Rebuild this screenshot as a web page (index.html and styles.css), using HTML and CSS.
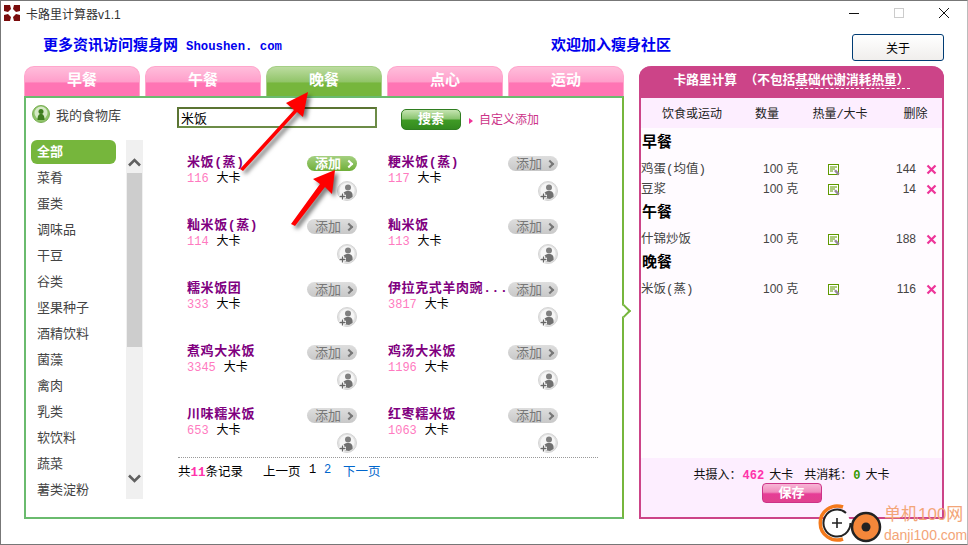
FILE: index.html
```html
<!DOCTYPE html>
<html lang="zh-CN">
<head>
    <meta charset="UTF-8">
    <title>卡路里计算器v1.1</title>
    <link rel="stylesheet" href="styles.css">
</head>
<body>

<svg class="sprite" width="0" height="0">
    <symbol id="person" viewBox="0 0 20 20">
        <circle cx="10" cy="10" r="9.5" fill="#e2e2e2" stroke="#d4d4d4"/>
        <circle cx="10" cy="9.5" r="7.5" fill="#f6f6f6"/>
        <circle cx="11" cy="6.5" r="3" fill="#808080"/>
        <path d="M6 17 C5 11 8 10 11 10 C14 10 16 11 15.5 16 L12 18 Z" fill="#707070"/>
        <path d="M2 15.5 H9 M5.5 12 V19" stroke="#fff" stroke-width="3.5"/>
        <path d="M2.5 15.5 H8.5 M5.5 12.5 V18.5" stroke="#666" stroke-width="1.3"/>
    </symbol>
    <symbol id="note" viewBox="0 0 12 12">
        <rect x=".5" y=".5" width="10" height="10" fill="#fff" stroke="#5f9900"/>
        <path d="M2 3 H9 M2 5 H7 M2 7 H5" stroke="#5f9900"/>
        <path d="M6 7 L8 5.5 L11.5 9.5 L10 11.5 Z" fill="#9a8aa0"/>
    </symbol>
    <symbol id="cross" viewBox="0 0 11 11">
        <path d="M1.5 1.5 L9.5 9.5 M9.5 1.5 L1.5 9.5" stroke="#ee3399" stroke-width="2.2"/>
    </symbol>
</svg>

<div class="window">

    <!-- 标题栏 -->
    <div class="titlebar">
        <svg class="app-icon" viewBox="0 0 16 16" width="16" height="16">
            <path d="M0 0 H6 L7 4 L4 7 L0 6 Z M16 0 H10 L9 4 L12 7 L16 6 Z M0 16 H6 L7 12 L4 9 L0 10 Z M16 16 H10 L9 12 L12 9 L16 10 Z" fill="#7a0c0c"/>
        </svg>
        <span class="app-title">卡路里计算器v1.1</span>
        <div class="win-buttons">
            <svg width="12" height="12" viewBox="0 0 12 12"><path d="M1 6.5 H11" stroke="#111"/></svg>
            <svg width="12" height="12" viewBox="0 0 12 12"><rect x="1.5" y="1.5" width="9" height="9" fill="none" stroke="#ccc"/></svg>
            <svg width="12" height="12" viewBox="0 0 12 12"><path d="M1 1 L11 11 M11 1 L1 11" stroke="#111"/></svg>
        </div>
    </div>

    <!-- 顶部链接 -->
    <div class="topbar">
        <div class="promo promo-left">更多资讯访问瘦身网<span class="promo-site">Shoushen. com</span></div>
        <div class="promo promo-right">欢迎加入瘦身社区</div>
        <button class="about-btn">关于</button>
    </div>

    <div class="main">
        <div class="left-col">
            <div class="tabs">
                <div class="tab">早餐</div>
                <div class="tab">午餐</div>
                <div class="tab tab-active">晚餐</div>
                <div class="tab">点心</div>
                <div class="tab">运动</div>
            </div>

            <div class="panel">
                <div class="panel-top">
                    <div class="library">
                        <svg width="18" height="18" viewBox="0 0 18 18">
                            <circle cx="9" cy="9" r="8.5" fill="#8fc46a" stroke="#7aae55"/>
                            <circle cx="9" cy="8" r="6.5" fill="#d6e9c6"/>
                            <circle cx="9" cy="6.5" r="2.5" fill="#3f7d1f"/>
                            <path d="M5.5 15 C5.5 10 7 9 9 9 C11 9 12.5 10 12.5 15 Z" fill="#3f7d1f"/>
                        </svg>
                        <span>我的食物库</span>
                    </div>
                    <input class="search-input" type="text" value="米饭">
                    <button class="search-btn">搜索</button>
                    <span class="custom-add">自定义添加</span>
                </div>

                <div class="panel-body">
                    <ul class="cats">
                        <li class="cat-active">全部</li>
                        <li>菜肴</li>
                        <li>蛋类</li>
                        <li>调味品</li>
                        <li>干豆</li>
                        <li>谷类</li>
                        <li>坚果种子</li>
                        <li>酒精饮料</li>
                        <li>菌藻</li>
                        <li>禽肉</li>
                        <li>乳类</li>
                        <li>软饮料</li>
                        <li>蔬菜</li>
                        <li>薯类淀粉</li>
                    </ul>

                    <div class="scroll">
                        <div class="scroll-arrow">
                            <svg width="13" height="9" viewBox="0 0 13 9"><path d="M1 7.5 L6.5 2 L12 7.5" fill="none" stroke="#606060" stroke-width="2.6"/></svg>
                        </div>
                        <div class="scroll-thumb"></div>
                        <div class="scroll-arrow scroll-arrow-down">
                            <svg width="13" height="9" viewBox="0 0 13 9"><path d="M1 1.5 L6.5 7 L12 1.5" fill="none" stroke="#606060" stroke-width="2.6"/></svg>
                        </div>
                    </div>

                    <div class="results">
                        <div class="foods">
                            <div class="food">
                                <div class="food-info"><div class="food-name">米饭(蒸)</div><div class="food-cal"><em>116</em>大卡</div></div>
                                <div class="food-actions"><button class="add-btn add-btn-hover">添加<b></b></button><svg class="avatar"><use href="#person"/></svg></div>
                            </div>
                            <div class="food">
                                <div class="food-info"><div class="food-name">粳米饭(蒸)</div><div class="food-cal"><em>117</em>大卡</div></div>
                                <div class="food-actions"><button class="add-btn">添加<b></b></button><svg class="avatar"><use href="#person"/></svg></div>
                            </div>
                            <div class="food">
                                <div class="food-info"><div class="food-name">籼米饭(蒸)</div><div class="food-cal"><em>114</em>大卡</div></div>
                                <div class="food-actions"><button class="add-btn">添加<b></b></button><svg class="avatar"><use href="#person"/></svg></div>
                            </div>
                            <div class="food">
                                <div class="food-info"><div class="food-name">籼米饭</div><div class="food-cal"><em>113</em>大卡</div></div>
                                <div class="food-actions"><button class="add-btn">添加<b></b></button><svg class="avatar"><use href="#person"/></svg></div>
                            </div>
                            <div class="food">
                                <div class="food-info"><div class="food-name">糯米饭团</div><div class="food-cal"><em>333</em>大卡</div></div>
                                <div class="food-actions"><button class="add-btn">添加<b></b></button><svg class="avatar"><use href="#person"/></svg></div>
                            </div>
                            <div class="food">
                                <div class="food-info"><div class="food-name">伊拉克式羊肉豌...</div><div class="food-cal"><em>3817</em>大卡</div></div>
                                <div class="food-actions"><button class="add-btn">添加<b></b></button><svg class="avatar"><use href="#person"/></svg></div>
                            </div>
                            <div class="food">
                                <div class="food-info"><div class="food-name">煮鸡大米饭</div><div class="food-cal"><em>3345</em>大卡</div></div>
                                <div class="food-actions"><button class="add-btn">添加<b></b></button><svg class="avatar"><use href="#person"/></svg></div>
                            </div>
                            <div class="food">
                                <div class="food-info"><div class="food-name">鸡汤大米饭</div><div class="food-cal"><em>1196</em>大卡</div></div>
                                <div class="food-actions"><button class="add-btn">添加<b></b></button><svg class="avatar"><use href="#person"/></svg></div>
                            </div>
                            <div class="food">
                                <div class="food-info"><div class="food-name">川味糯米饭</div><div class="food-cal"><em>653</em>大卡</div></div>
                                <div class="food-actions"><button class="add-btn">添加<b></b></button><svg class="avatar"><use href="#person"/></svg></div>
                            </div>
                            <div class="food">
                                <div class="food-info"><div class="food-name">红枣糯米饭</div><div class="food-cal"><em>1063</em>大卡</div></div>
                                <div class="food-actions"><button class="add-btn">添加<b></b></button><svg class="avatar"><use href="#person"/></svg></div>
                            </div>
                        </div>
                        <div class="pager">
                            <span class="pager-total">共<b>11</b>条记录</span>
                            <span class="pager-prev">上一页</span>
                            <span class="pager-num">1</span>
                            <span class="pager-num pager-link">2</span>
                            <span class="pager-link">下一页</span>
                        </div>
                    </div>
                </div>
                <div class="panel-notch"></div>
            </div>
        </div>

        <!-- 右侧计算面板 -->
        <div class="calc">
            <div class="calc-head">卡路里计算 （不包括<span class="calc-note">基础代谢消耗热量）</span></div>
            <div class="calc-cols">
                <span>饮食或运动</span><span>数量</span><span>热量/大卡</span><span>删除</span>
            </div>
            <div class="calc-body">
                <div class="meal">早餐</div>
                <div class="entry"><span class="entry-name">鸡蛋(均值)</span><span class="qty">100 克</span><svg class="note"><use href="#note"/></svg><span class="kcal">144</span><svg class="del"><use href="#cross"/></svg></div>
                <div class="entry"><span class="entry-name">豆浆</span><span class="qty">100 克</span><svg class="note"><use href="#note"/></svg><span class="kcal">14</span><svg class="del"><use href="#cross"/></svg></div>
                <div class="meal">午餐</div>
                <div class="entry"><span class="entry-name">什锦炒饭</span><span class="qty">100 克</span><svg class="note"><use href="#note"/></svg><span class="kcal">188</span><svg class="del"><use href="#cross"/></svg></div>
                <div class="meal">晚餐</div>
                <div class="entry"><span class="entry-name">米饭(蒸)</span><span class="qty">100 克</span><svg class="note"><use href="#note"/></svg><span class="kcal">116</span><svg class="del"><use href="#cross"/></svg></div>
            </div>
            <div class="calc-foot">
                <div class="totals">共摄入：<b class="in">462</b>大卡<span class="gap"></span>共消耗：<b class="out">0</b>大卡</div>
                <button class="save-btn">保存</button>
            </div>
        </div>
    </div>

    <!-- 红色箭头标注 -->
    <svg class="arrows" width="968" height="545" viewBox="0 0 968 545">
        <path d="M240 169 L294 110 L286 103 L308 92 L303 117 L297 112 L243 171 Z" fill="#f00"/>
        <path d="M291 224 L320 184 L313 179 L335 170 L332 194 L325 187 L295 226 Z" fill="#f00"/>
    </svg>

    <!-- 水印 -->
    <div class="watermark">
        <svg width="64" height="42" viewBox="0 0 64 42">
            <path d="M25 4 A17 17 0 1 0 25 36" fill="none" stroke="#f47a1c" stroke-width="3.5"/>
            <circle cx="19" cy="20" r="13" fill="#fff"/>
            <path d="M28 10 A13.5 13.5 0 1 0 32.5 20" fill="none" stroke="#222" stroke-width="2"/>
            <path d="M14 20 H24 M19 15 V25" stroke="#222" stroke-width="1.6"/>
            <circle cx="48" cy="24" r="14" fill="#f4873a" stroke="#222" stroke-width="2.5"/>
            <circle cx="48" cy="24" r="4.5" fill="#222"/>
        </svg>
        <div class="watermark-text">
            <div class="wm-name">单机100网</div>
            <div class="wm-url">danji100.com</div>
        </div>
    </div>
</div>

</body>
</html>
```

FILE: styles.css
```css
* {
    box-sizing: border-box;
}
body {
    margin: 0;
    background-color: #fff;
    font-family: "Liberation Mono", "Noto Sans CJK SC", monospace;
    font-size: 13px;
    color: #000;
}
.sprite {
    position: absolute;
}
.window {
    position: relative;
    width: 968px;
    height: 545px;
    overflow: hidden;
    background-color: #fff;
    border: 1px solid #777;
    border-right-color: #bbb;
}

/* 标题栏 */
.titlebar {
    display: flex;
    align-items: center;
    height: 24px;
    padding-left: 3px;
}
.app-icon {
    margin-right: 6px;
}
.app-title {
    font-family: "Liberation Sans", "Noto Sans CJK SC", sans-serif;
    font-size: 12px;
    color: #333;
}
.win-buttons {
    display: flex;
    gap: 33px;
    margin-left: auto;
    margin-right: 17px;
}

/* 顶部 */
.topbar {
    display: flex;
    align-items: center;
    height: 41px;
    padding-left: 42px;
}
.promo {
    margin-top: 2px;
    font-size: 15px;
    line-height: 20px;
    font-weight: bold;
    color: #0000ee;
}
.promo-left {
    width: 508px;
}
.promo-site {
    margin-left: 8px;
    font-size: 12.3px;
}
.promo-right {
    width: 301px;
}
.about-btn {
    width: 92px;
    height: 27px;
    margin-top: 4px;
    font-family: inherit;
    font-size: 12px;
    background: linear-gradient(#fff, #f0eeec);
    border: 1px solid #003c74;
    border-radius: 3px;
}

.main {
    display: flex;
    gap: 15px;
    padding-left: 23px;
}
.left-col {
    width: 600px;
}

/* 选项卡 */
.tabs {
    display: flex;
    gap: 5px;
}
.tab {
    width: 116px;
    height: 30px;
    text-align: center;
    font-size: 15px;
    line-height: 30px;
    font-weight: bold;
    color: #fff;
    background: linear-gradient(#ffbedb 0%, #ff9fcb 50%, #ff74b4 56%, #ff74b4 100%);
    border: 1px solid #ffa6cc;
    border-bottom: none;
    border-radius: 10px 10px 0 0;
}
.tab-active {
    background: linear-gradient(#bcdca0 0%, #92c56a 50%, #76b63c 56%, #76b63c 100%);
    border-color: #a5cf85;
}

.panel {
    position: relative;
    height: 423px;
    border: 2px solid #6abb6e;
    border-right-color: #76b63c;
}
.panel-notch {
    position: absolute;
    top: 208px;
    right: -7px;
    width: 10px;
    height: 10px;
    background-color: #fff;
    border-top: 2px solid #76b63c;
    border-right: 2px solid #76b63c;
    transform: rotate(45deg);
}
.panel-top {
    display: flex;
    align-items: flex-start;
    height: 42px;
    padding-left: 6px;
}
.library {
    display: flex;
    align-items: center;
    gap: 6px;
    width: 145px;
    height: 18px;
    margin-top: 7px;
    font-size: 13px;
    color: #444;
}
.search-input {
    width: 200px;
    height: 21px;
    margin-top: 9px;
    padding: 0 2px;
    font-family: inherit;
    font-size: 13px;
    border: 2px solid #5b7433;
    border-bottom-color: #6c8c47;
    border-right-color: #6c8c47;
    outline: none;
}
.search-btn {
    width: 60px;
    height: 21px;
    margin-top: 11px;
    margin-left: 24px;
    padding: 0;
    font-family: inherit;
    font-size: 13px;
    line-height: 17px;
    font-weight: bold;
    color: #fff;
    background: linear-gradient(#c6e5b2 0%, #8cc572 45%, #3f9a25 55%, #338a1f 100%);
    border: 1px solid #2f7d20;
    border-radius: 5px;
}
.custom-add {
    position: relative;
    margin-top: 15px;
    margin-left: 18px;
    font-size: 12px;
    line-height: 16px;
    color: #cc3388;
}
.custom-add::before {
    content: "";
    position: absolute;
    left: -10px;
    top: 5px;
    border-left: 4px solid #ee3399;
    border-top: 3px solid transparent;
    border-bottom: 3px solid transparent;
}

.panel-body {
    display: flex;
    align-items: flex-start;
    padding-left: 5px;
}
.cats {
    width: 85px;
    margin: 0;
    padding: 0;
    list-style: none;
}
.cats li {
    height: 26px;
    padding-left: 6px;
    line-height: 26px;
    font-size: 13px;
    color: #444;
}
.cats .cat-active {
    height: 24px;
    margin-bottom: 2px;
    font-weight: bold;
    color: #fff;
    background-color: #76b63c;
    border-radius: 6px;
}

/* 滚动条 */
.scroll {
    display: flex;
    flex-direction: column;
    width: 17px;
    height: 359px;
    margin-left: 10px;
    background-color: #f0f0f0;
}
.scroll-arrow {
    display: flex;
    align-items: center;
    justify-content: center;
    height: 33px;
    padding-top: 11px;
}
.scroll-arrow-down {
    margin-top: auto;
    height: 44px;
    padding-top: 3px;
}
.scroll-thumb {
    height: 174px;
    margin: 0 1px;
    background-color: #cdcdcd;
}

/* 食物列表 */
.results {
    width: 420px;
    margin-left: 35px;
    padding-top: 15px;
}
.foods {
    display: grid;
    grid-template-columns: 201px 201px;
    grid-auto-rows: 51px;
    row-gap: 12px;
    padding-left: 9px;
    height: 303px;
    border-bottom: 1px dotted #999;
}
.food {
    display: flex;
}
.food-info {
    width: 120px;
}
.food-name {
    height: 15px;
    font-size: 13px;
    line-height: 15px;
    font-weight: bold;
    letter-spacing: .6px;
    color: #800080;
    white-space: nowrap;
}
.food-cal {
    padding-top: 1px;
    font-size: 12px;
    line-height: 16px;
}
.food-cal em {
    margin-right: 8px;
    font-style: normal;
    color: #ff7ac0;
}
.food-actions {
    display: flex;
    flex-direction: column;
    align-items: flex-end;
    width: 50px;
}
.add-btn {
    display: flex;
    align-items: center;
    justify-content: center;
    gap: 5px;
    width: 50px;
    height: 15px;
    margin-top: 1px;
    padding: 1px 0 0 3px;
    font-family: inherit;
    font-size: 13px;
    line-height: 15px;
    color: #777;
    background: linear-gradient(#dedede, #c8c8c8);
    border: none;
    border-radius: 8px;
}
.add-btn b {
    width: 6px;
    height: 6px;
    border-top: 2px solid #777;
    border-right: 2px solid #777;
    transform: rotate(45deg);
}
.add-btn-hover {
    font-weight: bold;
    color: #fff;
    background: linear-gradient(#a4d080, #6fae38);
}
.add-btn-hover b {
    border-color: #fff;
}
.avatar {
    width: 20px;
    height: 20px;
    margin-top: 10px;
}

.pager {
    display: flex;
    align-items: center;
    height: 24px;
    font-size: 12.5px;
}
.pager-total {
    width: 85px;
}
.pager-total b {
    color: #ff33aa;
}
.pager-prev {
    width: 46px;
}
.pager-num {
    width: 15px;
    font-size: 12px;
}
.pager-num.pager-link {
    width: 19px;
}
.pager-link {
    color: #0066cc;
}

/* 右侧面板 */
.calc {
    display: flex;
    flex-direction: column;
    width: 305px;
    height: 453px;
    border: 2px solid #cc4488;
    border-top: none;
    border-radius: 12px 12px 0 0;
}
.calc-head {
    height: 32px;
    margin: 0 -2px;
    text-align: center;
    font-size: 12.7px;
    line-height: 30px;
    font-weight: bold;
    color: #fff;
    background-color: #cc4488;
    border-radius: 12px 12px 0 0;
}
.calc-note {
    border-bottom: 1px dashed #fff;
}
.calc-cols {
    display: grid;
    grid-template-columns: 102px 48px 98px 53px;
    height: 30px;
    text-align: center;
    font-size: 12px;
    line-height: 35px;
    color: #222;
    background-color: #fdeeff;
}
.calc-body {
    flex: 1;
    font-size: 12.5px;
    color: #444;
    background-color: #fffbff;
}
.meal {
    height: 28px;
    margin-bottom: 2px;
    padding-left: 1px;
    font-size: 15px;
    line-height: 32px;
    font-weight: bold;
    color: #000;
}
.entry {
    display: grid;
    grid-template-columns: 122px 65px 30px 58px 22px;
    align-items: center;
    height: 20px;
    line-height: 20px;
}
.entry-name {
    padding-top: 2px;
}
.qty, .kcal {
    font-family: "Liberation Sans", "Noto Sans CJK SC", sans-serif;
    font-size: 12px;
}
.kcal {
    text-align: right;
}
.note {
    width: 12px;
    height: 12px;
    margin-top: 1px;
}
.del {
    width: 11px;
    height: 11px;
    margin-top: 1px;
    margin-left: 10px;
}
.calc-foot {
    height: 59px;
    padding-top: 9px;
    text-align: center;
    background-color: #fdeeff;
}
.totals {
    height: 16px;
    font-size: 12px;
    line-height: 19px;
    color: #111;
}
.totals b {
    margin: 0 5px 0 1px;
}
.totals .in {
    color: #ff33aa;
}
.totals .out {
    color: #339900;
}
.gap {
    display: inline-block;
    width: 11px;
}
.save-btn {
    display: block;
    width: 60px;
    height: 20px;
    margin: 0 auto;
    padding: 0;
    font-family: inherit;
    font-size: 13px;
    line-height: 17px;
    font-weight: bold;
    color: #fff;
    background: linear-gradient(#f7b6d6 0%, #f08cbd 45%, #e63d96 55%, #e0428e 100%);
    border: 1px solid #cc3388;
    border-radius: 4px;
}

/* 覆盖层 */
.arrows {
    position: absolute;
    left: -1px;
    top: -1px;
    pointer-events: none;
    filter: drop-shadow(3px 3px 2px rgba(0, 0, 0, .55));
}
.watermark {
    position: absolute;
    right: -1px;
    bottom: -1px;
    display: flex;
    align-items: flex-end;
    gap: 2px;
}
.watermark-text {
    width: 84px;
    color: #f3a578;
    white-space: nowrap;
}
.wm-name {
    font-family: "Liberation Sans", "Noto Sans CJK SC", sans-serif;
    font-size: 17px;
    line-height: 24px;
}
.wm-url {
    font-family: "Liberation Sans", sans-serif;
    font-size: 14px;
    line-height: 17px;
    padding-bottom: 1px;
}
```
